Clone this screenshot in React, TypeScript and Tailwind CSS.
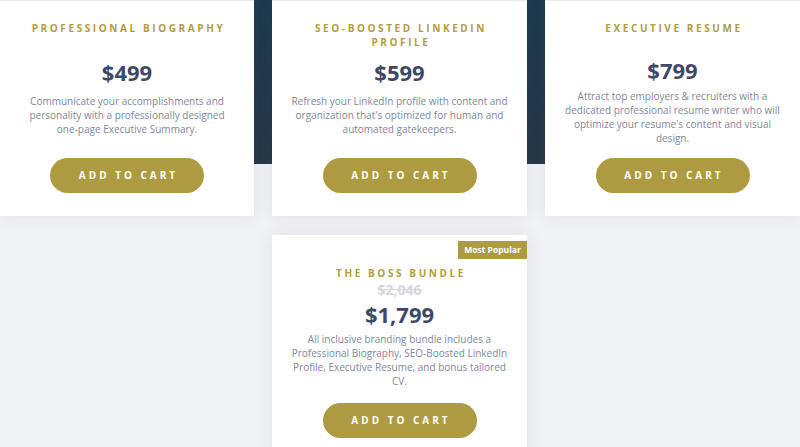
import React from "react";

type CardProps = {
  title: string;
  price: string;
  desc: string;
  priceMt: string;
  descMt: string;
  descPx: string;
};

function CartButton() {
  return (
    <button className="w-[154px] h-[35px] rounded-full bg-[#ae9a40] text-white text-[10px] font-bold tracking-[3px] pl-[3px] flex items-center justify-center">
      ADD TO CART
    </button>
  );
}

function Card({ title, price, desc, priceMt, descMt, descPx }: CardProps) {
  return (
    <div className="bg-white h-[216px] border-t border-[#e9e9ee] shadow-[0_0_16px_rgba(30,40,60,0.09)] flex flex-col items-center pt-[20px] pb-[23px] text-center">
      <div className="px-[24px] text-[10px] leading-[14px] font-bold tracking-[2.6px] pl-[27px] text-[#b29c40]">
        {title}
      </div>
      <div className={`${priceMt} text-[22px] leading-[30px] font-bold text-[#3f4767]`}>{price}</div>
      <div className={`${descMt} ${descPx} text-[10px] leading-[14px] text-[#82879b]`}>{desc}</div>
      <div className="mt-auto">
        <CartButton />
      </div>
    </div>
  );
}

export default function App() {
  return (
    <div
      className="w-[800px] h-[447px] overflow-hidden bg-[linear-gradient(180deg,#1d3b50_0px,#29394b_164px,#f1f2f6_164px,#f1f2f6_100%)]"
      style={{ fontFamily: '"Open Sans", "Noto Sans", sans-serif' }}
    >
      <div className="grid grid-cols-[254px_255px_255px] gap-x-[18px] gap-y-[19px]">
        <Card
          title="PROFESSIONAL BIOGRAPHY"
          price="$499"
          desc="Communicate your accomplishments and personality with a professionally designed one-page Executive Summary."
          priceMt="mt-[22px]"
          descMt="mt-[7px]"
          descPx="px-[24px]"
        />
        <Card
          title="SEO-BOOSTED LINKEDIN PROFILE"
          price="$599"
          desc="Refresh your LinkedIn profile with content and organization that's optimized for human and automated gatekeepers."
          priceMt="mt-[8px]"
          descMt="mt-[7px]"
          descPx="px-[16px]"
        />
        <Card
          title="EXECUTIVE RESUME"
          price="$799"
          desc="Attract top employers & recruiters with a dedicated professional resume writer who will optimize your resume's content and visual design."
          priceMt="mt-[20px]"
          descMt="mt-[4px]"
          descPx="px-[16px]"
        />
        <div className="col-start-2 relative bg-white h-[240px] shadow-[0_0_16px_rgba(30,40,60,0.09)] flex flex-col items-center pt-[31px] text-center">
          <div className="absolute top-[6px] right-0 w-[69px] h-[18px] bg-[#ae9a40] text-white text-[8.5px] font-bold flex items-center justify-center">
            Most Popular
          </div>
          <div className="text-[10px] leading-[14px] font-bold tracking-[2.6px] pl-[3px] text-[#b29c40]">
            THE BOSS BUNDLE
          </div>
          <div className="mt-[1px] text-[14px] leading-[18px] font-bold text-[#d6d6da] line-through">$2,046</div>
          <div className="text-[22px] leading-[30px] font-bold text-[#3f4767]">$1,799</div>
          <div className="mt-[3px] px-[16px] text-[10px] leading-[14px] text-[#82879b]">
            All inclusive branding bundle includes a Professional Biography, SEO-Boosted LinkedIn Profile, Executive Resume, and bonus tailored CV.
          </div>
          <div className="mt-[15px]">
            <CartButton />
          </div>
        </div>
      </div>
    </div>
  );
}
